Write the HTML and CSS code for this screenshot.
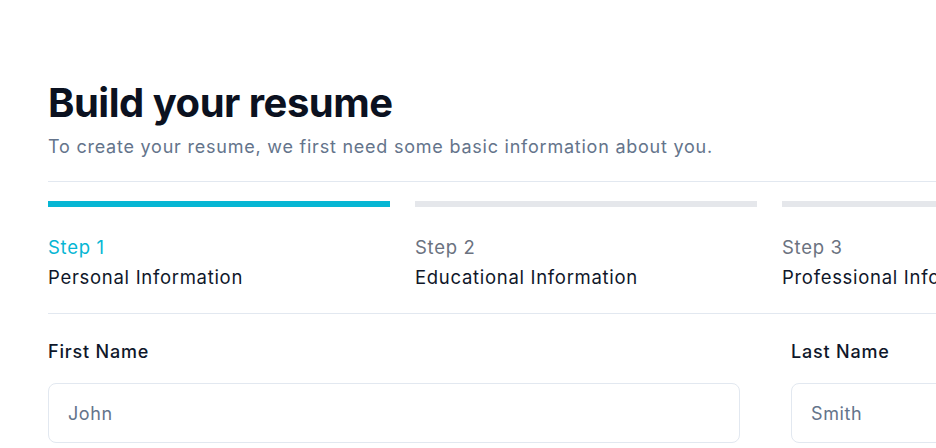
FILE: index.html
```html
<!DOCTYPE html>
<html lang="en">
<head>
<meta charset="utf-8">
<title>Build your resume</title>
<link rel="stylesheet" href="styles.css">
</head>
<body>
<main class="page">
  <header class="head">
    <h1 class="title">Build your resume</h1>
    <p class="subtitle">To create your resume, we first need some basic information about you.</p>
  </header>
  <ol class="steps">
    <li class="step active">
      <span class="bar"></span>
      <span class="step-num">Step 1</span>
      <span class="step-name">Personal Information</span>
    </li>
    <li class="step">
      <span class="bar"></span>
      <span class="step-num">Step 2</span>
      <span class="step-name">Educational Information</span>
    </li>
    <li class="step">
      <span class="bar"></span>
      <span class="step-num">Step 3</span>
      <span class="step-name">Professional Information</span>
    </li>
  </ol>
  <form class="form">
    <label class="field first">
      <span class="label">First Name</span>
      <input class="input" type="text" placeholder="John">
    </label>
    <label class="field last">
      <span class="label">Last Name</span>
      <input class="input" type="text" placeholder="Smith">
    </label>
  </form>
</main>
</body>
</html>
```
FILE: styles.css
```css
* { box-sizing: border-box; }
html, body { margin: 0; padding: 0; background: #ffffff; overflow: hidden; }
body {
  font-family: Inter, "Noto Sans", sans-serif;
  color: #0f172a;
  width: 936px;
  height: 448px;
}
.page {
  width: 1124px;
  padding: 79px 0 0 48px;
}
.head {
  padding-bottom: 20px;
  border-bottom: 1px solid #e2e8f0;
}
.title {
  margin: 0;
  font-size: 40px;
  line-height: 48px;
  font-weight: 700;
  letter-spacing: -0.5px;
  color: #0b1120;
}
.subtitle {
  margin: 6px 0 0;
  font-size: 18px;
  line-height: 28px;
  letter-spacing: 0.77px;
  color: #64748b;
}
.steps {
  list-style: none;
  margin: 0;
  padding: 19px 0 22px;
  display: grid;
  grid-template-columns: repeat(3, 342px);
  column-gap: 25px;
  border-bottom: 1px solid #e2e8f0;
}
.step { display: flex; flex-direction: column; }
.bar {
  display: block;
  height: 6px;
  background: #e5e7eb;
  margin-bottom: 26px;
}
.step.active .bar { background: #06b6d4; }
.step-num {
  font-size: 18.5px;
  line-height: 28px;
  letter-spacing: 0.7px;
  color: #6b7280;
}
.step.active .step-num { color: #06b6d4; }
.step-name {
  margin-top: 2px;
  font-size: 18.5px;
  line-height: 28px;
  letter-spacing: 0.7px;
  color: #0f172a;
  white-space: nowrap;
}
.form {
  display: grid;
  grid-template-columns: 692px 300px;
  column-gap: 51px;
  padding-top: 24px;
}
.field { display: flex; flex-direction: column; }
.label {
  font-size: 18px;
  line-height: 28px;
  font-weight: 500;
  letter-spacing: 0.8px;
  color: #0f172a;
}
.input {
  margin-top: 17px;
  height: 60px;
  border: 1.5px solid #e2e8f0;
  border-radius: 8px;
  padding: 0 19px;
  font-family: Inter, "Noto Sans", sans-serif;
  font-size: 18px;
  letter-spacing: 0.6px;
  color: #0f172a;
  background: #ffffff;
  outline: none;
}
.input::placeholder { color: #64748b; opacity: 1; }
```
